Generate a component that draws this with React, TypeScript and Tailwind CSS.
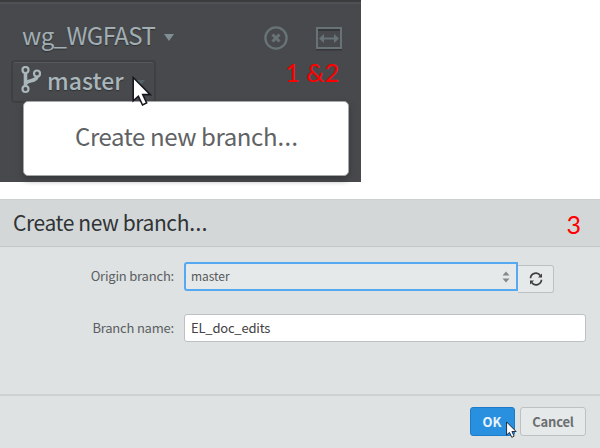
import React from "react";

const sans = "font-['Noto_Sans_CJK_SC','Noto_Sans',sans-serif]";

function BranchIcon() {
  return (
    <svg width="20" height="28" viewBox="0 0 20 28" fill="none" stroke="#a9b6bb" strokeWidth="2.200">
      <circle cx="4.500" cy="4" r="3" />
      <circle cx="4.500" cy="23" r="3" />
      <circle cx="16" cy="7.500" r="3" />
      <path d="M4.500 7V20M5 17.500c1-4 10.500-1.500 11-7" strokeWidth="3.600" />
    </svg>
  );
}

function CloseCircleIcon() {
  return (
    <svg width="26" height="26" viewBox="0 0 26 26" fill="none" stroke="#687377">
      <circle cx="13" cy="13" r="10.600" strokeWidth="2.400" />
      <path d="M9.500 9.500l7 7M16.500 9.500l-7 7" strokeWidth="3" />
    </svg>
  );
}

function WidthIcon() {
  return (
    <svg width="28" height="26" viewBox="0 0 28 26" fill="none" stroke="#687377">
      <path d="M3 5h22M1 24.500h26" stroke="#36373a" strokeWidth="1.800" />
      <path d="M2 3h24v20H2z" strokeWidth="2" />
      <path d="M7 13.500h14" strokeWidth="2" />
      <path d="M4 13.500l5-4.500v9zM24 13.500l-5-4.500v9z" fill="#687377" stroke="none" />
    </svg>
  );
}

function RefreshIcon() {
  return (
    <svg width="14" height="14" viewBox="0 0 14 14" fill="none" stroke="#3c3e40" strokeWidth="1.700">
      <path d="M1.500 6.200A5.400 5.400 0 0 1 11.300 3.500M12.500 7.800A5.400 5.400 0 0 1 2.700 10.500" />
      <path d="M13 1.500v4H9zM1 12.500V8.500h4z" fill="#3c3e40" stroke="none" />
    </svg>
  );
}

function Pointer({ className }: { className: string }) {
  return (
    <svg className={className} viewBox="0 0 19 29" fill="#fff" stroke="#15151f" strokeWidth="1.500">
      <path d="M1 1.500V24l5-4.500 4 8.500 4-2-3.800-8H17.500z" />
    </svg>
  );
}

function Toolbar() {
  return (
    <section className="relative h-[182px] w-[361px] border-t-2 border-[#3b3c3e] bg-[#48494c] pl-[11px] pt-[12px] shadow-[inset_0_2px_0_#505154]">
      <div className="flex h-[42px] items-center">
        <span className="ml-[11px] w-[134px] text-[24px] leading-[42px] tracking-[-0.600px] text-[#a1aeb3] [text-shadow:0_1px_1px_#303133]">wg_WGFAST</span>
        <svg className="ml-[7px] mt-[5px]" width="12" height="9" viewBox="0 0 12 9">
          <path d="M1 1h10L6 8z" fill="#7f8f93" />
        </svg>
        <div className="ml-[88px] mt-[5px] flex items-center gap-[26px]">
          <CloseCircleIcon />
          <WidthIcon />
        </div>
      </div>
      <div className="mt-[4px] flex h-[43px] w-[145px] items-start rounded-[4px] border-2 border-[#3f4043] pl-[8px] pt-[4px] shadow-[inset_0_1px_0_#58595c]">
        <BranchIcon />
        <span className="ml-[6px] text-[23px] font-medium leading-[29px] text-[#a9b6bb] [text-shadow:0_1px_1px_#303133]">master</span>
      </div>
      <svg className="absolute left-[134px] top-[77px]" width="12" height="8" viewBox="0 0 12 8">
        <path d="M0 1h11L6 7z" fill="#566366" />
      </svg>
      <div className="absolute left-[285px] top-[54px] font-['Lato',sans-serif] text-[25.500px] leading-[32px] text-[#ff0000]">1 &amp;2</div>
      <div className="absolute left-[23px] top-[99px] h-[75px] w-[326px] rounded-[5px] border border-[#a5a8a9] bg-white pl-[51px] text-[24px] leading-[68px] tracking-[-0.400px] text-[#606264] shadow-[0_3px_6px_#35373a]">
        Create new branch<span className="font-['Open_Sans',sans-serif] text-[27px] leading-[0px]">…</span>
      </div>
      <Pointer className="absolute left-[132px] top-[74px] h-[30px] w-[20px]" />
    </section>
  );
}

function Dialog() {
  return (
    <section className="flex h-[249px] flex-col border-t border-[#cbcfd0] bg-[#dee2e3] text-[13px] text-[#5b5e60]">
      <header className="flex h-[47px] shrink-0 items-center justify-between border-b border-[#c3c7c8] bg-[#d3d7d8] pl-[13px] pr-[19px]">
        <h1 className="mb-[2px] text-[21px] leading-[44px] tracking-[-0.400px] text-[#303335]">
          Create new branch<span className="font-['Open_Sans',sans-serif] text-[24px] leading-[0px]">…</span>
        </h1>
        <span className="mt-[2px] font-['Lato',sans-serif] text-[25px] leading-[30px] text-[#ff0000]">3</span>
      </header>
      <div className="h-[147px] pt-[15px]">
        <div className="flex h-[32px]">
          <label className="w-[174px] text-right leading-[28px] tracking-[-0.200px]">Origin branch:</label>
          <div className="ml-[10px] flex h-[29px] w-[334px] items-center justify-between rounded-l-[3px] border-2 border-[#55a9f0] bg-[#e6e9ea] pl-[5px] pr-[6px] text-[12px] text-[#55585a]">
            <span className="mb-[2px] leading-[22px] tracking-[-0.050px]">master</span>
            <svg width="8" height="12" viewBox="0 0 8 12" fill="#85888a">
              <path d="M0.500 4.500L4 0.500l3.500 4zM0.500 7.500h7L4 11.500z" />
            </svg>
          </div>
          <button className="mt-[3px] flex h-[28px] w-[36px] items-center justify-center rounded-r-[3px] border border-l-0 border-[#bdc1c2] bg-[#e6e9ea]">
            <RefreshIcon />
          </button>
        </div>
        <div className="mt-[20px] flex h-[28px]">
          <label className="w-[174px] text-right leading-[28px] tracking-[-0.200px]">Branch name:</label>
          <div className="ml-[10px] w-[402px] rounded-[3px] border border-[#bdc1c2] bg-white pl-[6px] leading-[26px] tracking-[-0.200px] text-[#3f4143]">EL_doc_edits</div>
        </div>
      </div>
      <footer className="flex h-[54px] gap-[5px] border-t-2 border-[#cdd1d2] pl-[470px] pt-[11px] font-bold">
        <button className="relative h-[29px] w-[45px] rounded-[3px] border border-[#1c7cc9] bg-[#2990e0] pr-[1px] leading-[25px] text-[#e8f3fc]">
          OK
          <Pointer className="absolute left-[35px] top-[13px] h-[17px] w-[11px]" />
        </button>
        <button className="h-[29px] w-[66px] rounded-[3px] border border-[#bdc1c2] bg-[#e6e9ea] leading-[25px] tracking-[-0.200px] text-[#6b6e70]">Cancel</button>
      </footer>
    </section>
  );
}

export default function App() {
  return (
    <main className={`${sans} flex h-[448px] w-[600px] flex-col gap-[17px] overflow-hidden bg-white`}>
      <Toolbar />
      <Dialog />
    </main>
  );
}
